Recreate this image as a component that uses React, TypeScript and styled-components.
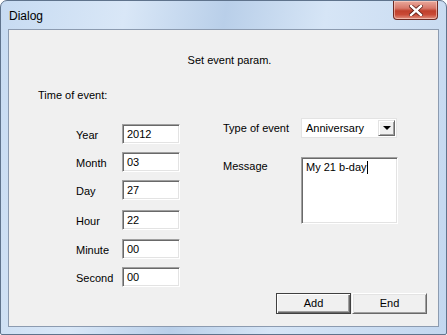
import React from "react";
import styled, { createGlobalStyle } from "styled-components";

const Global = createGlobalStyle`
  html, body { margin: 0; padding: 0; background: #ffffff; }
  * { box-sizing: border-box; }
`;

const Window = styled.div`
  width: 447px;
  height: 335px;
  display: flex;
  flex-direction: column;
  border: 1px solid #5f738c;
  border-radius: 7px 7px 2px 2px;
  background: linear-gradient(100deg, #c7dbf2 0%, #d9e7f7 25%, #b9cfe9 45%, #d6e5f6 65%, #c3d7ef 100%);
  font-family: "Liberation Sans", Arial, sans-serif;
  font-size: 11px;
  color: #000;
  overflow: hidden;
`;

const TitleBar = styled.div`
  height: 28px;
  display: flex;
  align-items: flex-start;
  padding: 0 8px 0 8px;
  flex-shrink: 0;
`;

const Title = styled.span`
  margin-top: 8px;
  font-size: 12px;
  line-height: 14px;
  color: #000;
`;

const CloseButton = styled.div`
  margin-left: auto;
  width: 45px;
  height: 19px;
  border: 1px solid #6d2a23;
  border-top: none;
  border-radius: 0 0 4px 4px;
  background: linear-gradient(180deg, #e9a99c 0%, #d7786a 40%, #c0402c 55%, #c94a36 75%, #e09080 100%);
  display: flex;
  align-items: center;
  justify-content: center;
  box-shadow: inset 0 0 0 1px rgba(255, 220, 210, 0.55);
`;

const Client = styled.div`
  flex: 1;
  margin: 0 7px 7px 7px;
  border: 1px solid #8c9bb0;
  background: #f0f0f0;
  display: flex;
  flex-direction: column;
`;

const Heading = styled.div`
  padding: 24px 0 0 12px;
  text-align: center;
  line-height: 13px;
`;

const SectionLabel = styled.div`
  margin: 22px 0 0 29px;
  line-height: 13px;
`;

const Body = styled.div`
  display: flex;
  margin-top: 16px;
  padding-left: 67px;
  gap: 43px;
`;

const FieldGrid = styled.div`
  padding-top: 6px;
  display: grid;
  grid-template-columns: 46px 58px;
  row-gap: 8px;
`;

const FieldLabel = styled.span<{ $shift?: number }>`
  align-self: end;
  line-height: 13px;
  margin-bottom: 2px;
`;

const Field = styled.div<{ $shift?: number }>`
  height: 20px;
  margin-top: ${(p) => p.$shift ?? 0}px;
  background: #fff;
  border-top: 1px solid #a0a0a0;
  border-left: 1px solid #a0a0a0;
  border-right: 1px solid #ffffff;
  border-bottom: 1px solid #ffffff;
  box-shadow: inset 1px 1px 0 #696969, inset -1px -1px 0 #e3e3e3;
  padding: 3px 0 0 4px;
  line-height: 13px;
`;

const RightGrid = styled.div`
  display: grid;
  grid-template-columns: 78px 96px;
  row-gap: 19px;
  align-content: start;
`;

const RightLabel = styled.span<{ $top?: boolean }>`
  align-self: ${(p) => (p.$top ? "start" : "center")};
  margin-top: ${(p) => (p.$top ? 3 : 0)}px;
  line-height: 13px;
`;

const Combo = styled.div`
  height: 20px;
  background: #fff;
  border: 1px solid #e3e3e3;
  display: flex;
  align-items: center;
  padding: 0 1px 0 4px;
`;

const ComboText = styled.span`
  flex: 1;
  line-height: 13px;
`;

const ComboArrow = styled.div`
  width: 17px;
  height: 16px;
  background: #f0f0f0;
  border-top: 1px solid #e3e3e3;
  border-left: 1px solid #e3e3e3;
  border-right: 1px solid #696969;
  border-bottom: 1px solid #696969;
  box-shadow: inset 1px 1px 0 #ffffff, inset -1px -1px 0 #a0a0a0;
  display: flex;
  align-items: center;
  justify-content: center;
`;

const Triangle = styled.div`
  width: 0;
  height: 0;
  border-left: 4px solid transparent;
  border-right: 4px solid transparent;
  border-top: 4px solid #000;
`;

const MessageBox = styled.div`
  width: 97px;
  height: 67px;
  background: #fff;
  border-top: 1px solid #a0a0a0;
  border-left: 1px solid #a0a0a0;
  border-right: 1px solid #ffffff;
  border-bottom: 1px solid #ffffff;
  box-shadow: inset 1px 1px 0 #696969, inset -1px -1px 0 #e3e3e3;
  padding: 3px 0 0 4px;
  line-height: 13px;
`;

const Caret = styled.span`
  display: inline-block;
  width: 1px;
  height: 13px;
  background: #000;
  vertical-align: top;
`;

const Footer = styled.div`
  margin-top: auto;
  display: flex;
  justify-content: flex-end;
  gap: 1px;
  padding: 0 11px 12px 0;
`;

const Button = styled.div<{ $default?: boolean }>`
  width: 75px;
  height: 21px;
  background: #f0f0f0;
  display: flex;
  align-items: center;
  justify-content: center;
  line-height: 13px;
  border: 1px solid ${(p) => (p.$default ? "#404040" : "#ffffff")};
  border-right-color: ${(p) => (p.$default ? "#404040" : "#696969")};
  border-bottom-color: ${(p) => (p.$default ? "#404040" : "#696969")};
  box-shadow: ${(p) =>
    p.$default
      ? "inset 1px 1px 0 #ffffff, inset -1px -1px 0 #696969, inset -2px -2px 0 #a0a0a0"
      : "inset 1px 1px 0 #e3e3e3, inset -1px -1px 0 #a0a0a0"};
`;

const fields: { label: string; value: string; shift?: number }[] = [
  { label: "Year", value: "2012" },
  { label: "Month", value: "03" },
  { label: "Day", value: "27" },
  { label: "Hour", value: "22", shift: 2 },
  { label: "Minute", value: "00", shift: 1 },
  { label: "Second", value: "00" },
];

export default function App() {
  return (
    <>
      <Global />
      <Window>
        <TitleBar>
          <Title>Dialog</Title>
          <CloseButton>
            <svg width="14" height="11" viewBox="0 0 14 11">
              <path d="M2 1 L12 10 M12 1 L2 10" stroke="#5a1a12" strokeWidth="4" strokeLinecap="square" />
              <path d="M2 1 L12 10 M12 1 L2 10" stroke="#ffffff" strokeWidth="2.4" strokeLinecap="square" />
            </svg>
          </CloseButton>
        </TitleBar>
        <Client>
          <Heading>Set event param.</Heading>
          <SectionLabel>Time of event:</SectionLabel>
          <Body>
            <FieldGrid>
              {fields.map((f) => (
                <React.Fragment key={f.label}>
                  <FieldLabel>{f.label}</FieldLabel>
                  <Field $shift={f.shift}>{f.value}</Field>
                </React.Fragment>
              ))}
            </FieldGrid>
            <RightGrid>
              <RightLabel>Type of event</RightLabel>
              <Combo>
                <ComboText>Anniversary</ComboText>
                <ComboArrow>
                  <Triangle />
                </ComboArrow>
              </Combo>
              <RightLabel $top>Message</RightLabel>
              <MessageBox>
                My 21 b-day
                <Caret />
              </MessageBox>
            </RightGrid>
          </Body>
          <Footer>
            <Button $default>Add</Button>
            <Button>End</Button>
          </Footer>
        </Client>
      </Window>
    </>
  );
}
